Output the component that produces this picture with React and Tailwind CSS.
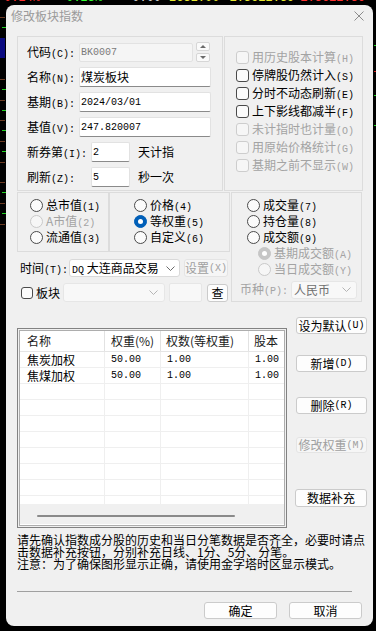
import React from 'react';

const K = ({ children }) => (
  <span className="font-['Liberation_Mono',monospace] text-[10px]">{children}</span>
);

const Chevron = ({ color = '#6b6b6b' }) => (
  <svg width="9" height="5" viewBox="0 0 9 5">
    <path d="M0.5 0.5 L4.5 4.5 L8.5 0.5" fill="none" stroke={color} strokeWidth="1" />
  </svg>
);

const Check = ({ disabled, children }) => (
  <div className="flex items-center h-[18px]">
    <span
      className={`w-[13px] h-[13px] rounded-[3px] border ${
        disabled ? 'border-[#cdcdcd] bg-[#f6f6f6]' : 'border-[#4a4a4a] bg-[#fbfbfb]'
      }`}
    />
    <span className={`ml-[3px] whitespace-nowrap ${disabled ? 'text-[#a3a3a3]' : ''}`}>{children}</span>
  </div>
);

const Radio = ({ checked, disabled, children }) => {
  let circle = 'border-[#4a4a4a] bg-[#fbfbfb]';
  if (disabled) circle = 'border-[#c9c9c9] bg-[#f6f6f6]';
  if (checked && !disabled) circle = 'border-[#005fb8] bg-[#005fb8]';
  if (checked && disabled) circle = 'border-[#c6c6c6] bg-[#c6c6c6]';
  return (
    <div className="flex items-center h-[16px]">
      <span className={`w-[13px] h-[13px] rounded-full border flex items-center justify-center ${circle}`}>
        {checked && <span className="w-[5px] h-[5px] rounded-full bg-white" />}
      </span>
      <span className={`ml-[3px] whitespace-nowrap ${disabled ? 'text-[#a3a3a3]' : ''}`}>{children}</span>
    </div>
  );
};

const Btn = ({ className = '', disabled, children }) => (
  <div
    className={`flex items-center justify-center rounded-[3px] border whitespace-nowrap ${
      disabled ? 'border-[#e4e4e4] bg-[#f6f6f6] text-[#a0a0a0]' : 'border-[#cbcbcb] bg-[#fdfdfd]'
    } ${className}`}
  >
    {children}
  </div>
);

const Input = ({ className = '', children }) => (
  <div
    className={`h-[20px] bg-white border border-[#e2e2e2] border-b-[#8a8a8a] rounded-[2px] flex items-center pl-[1px] ${className}`}
  >
    {children}
  </div>
);

const leftTicks = [
  [12, '#6b3a22', 0, 5, 1],
  [22, '#1fd11f', 2, 4, 1],
  [33, '#0a0a80', 0, 5, 20],
  [74, '#6b3a22', 0, 5, 1],
  [84, '#1fd11f', 2, 4, 1],
  [95, '#6b3a22', 0, 5, 1],
  [105, '#1fd11f', 2, 4, 1],
  [115, '#6b3a22', 0, 5, 1],
  [125, '#1fd11f', 2, 4, 1],
  [136, '#6b3a22', 0, 5, 1],
  [146, '#1fd11f', 2, 4, 1],
  [157, '#6b3a22', 0, 5, 1],
  [177, '#6b3a22', 0, 5, 1],
  [187, '#1fd11f', 2, 4, 1],
  [198, '#6b3a22', 0, 5, 1],
  [208, '#1fd11f', 2, 4, 1],
  [219, '#6b3a22', 0, 5, 1],
];

const rightTicks = [
  [7, '#1fd11f', 3],
  [20, '#0a0a80', 10],
  [40, '#1fd11f', 1],
  [66, '#d02020', 1],
  [90, '#1fd11f', 1],
  [120, '#1fd11f', 1],
  [180, '#1fd11f', 7],
  [200, '#1fd11f', 7],
];

const Ticks = ({ items, width }) => {
  let y = 0;
  return (
    <div className="flex flex-col" style={{ width }}>
      {items.map(([top, color, left = 0, w = width, h = 1], i) => {
        const mt = top - y;
        y = top + h;
        return (
          <div
            key={i}
            style={{ marginTop: mt, marginLeft: left, width: w, height: h, background: color }}
          />
        );
      })}
    </div>
  );
};

const rows = [
  ['焦炭加权', '50.00', '1.00', '1.00'],
  ['焦煤加权', '50.00', '1.00', '1.00'],
  ['', '', '', ''],
  ['', '', '', ''],
  ['', '', '', ''],
  ['', '', '', ''],
  ['', '', '', ''],
  ['', '', '', ''],
  ['', '', '', ''],
  ['', '', '', ''],
];

export default function App() {
  return (
    <div className="w-[376px] h-[631px] bg-black overflow-hidden font-['Noto_Sans_CJK_SC',sans-serif] text-[12px] text-black flex flex-col">
      {/* background quote strip */}
      <div className="h-[5px] overflow-hidden flex items-start font-['Liberation_Mono',monospace] text-[12px] leading-[13px] whitespace-nowrap">
        <span className="-mt-[8px] ml-[4px] text-[#ff3030]">0.24%</span>
        <span className="-mt-[8px] ml-[19px] text-[#30ff30]">-0.23%</span>
        <span className="-mt-[8px] ml-[30px] text-[#d8d8d8]">0.00</span>
        <span className="-mt-[8px] ml-[8px] text-[#e8e830]">2632.00</span>
        <span className="-mt-[8px] ml-[10px] text-[#e8e830]">1.3612.39</span>
        <span className="-mt-[8px] ml-[6px] text-[#ff3030]">1.3612.39</span>
        <span className="-mt-[8px] ml-[6px] text-[#30ff30]">-0</span>
      </div>

      <div className="flex">
        <Ticks items={leftTicks} width={6} />

        {/* dialog */}
        <div className="w-[367px] h-[621px] bg-[#f0f0f0] rounded-[8px] flex flex-col">
          <div className="h-[22px] flex items-center justify-between pl-[5px] pr-[9px]">
            <span className="text-[#9a9a9a]">修改板块指数</span>
            <svg width="10" height="10" viewBox="0 0 10 10">
              <path d="M0.5 0.5 L9.5 9.5 M9.5 0.5 L0.5 9.5" stroke="#8c8c8c" strokeWidth="1" />
            </svg>
          </div>

          <div className="pl-[11px] flex flex-col">
            {/* section 1 */}
            <div className="flex mt-[9px]">
              <div className="w-[206px] h-[155px] border border-[#dcdcdc] pt-[5px] pl-[9px] flex flex-col gap-[5px]">
                <div className="flex items-center h-[20px]">
                  <span className="w-[52px] whitespace-nowrap">代码<K>(C):</K></span>
                  <div className="h-[19px] w-[114px] bg-[#f5f5f5] border border-[#e2e2e2] rounded-[2px] flex items-center pl-[1px] text-[#7a7a7a]">
                    <K>BK0007</K>
                  </div>
                  <div className="ml-[3px] w-[14px] flex flex-col gap-[2px]">
                    <div className="h-[9px] border border-[#d6d6d6] bg-[#fafafa] rounded-[2px] flex items-center justify-center">
                      <span className="w-0 h-0 border-l-[3px] border-r-[3px] border-b-[3px] border-l-transparent border-r-transparent border-b-[#6a6a6a]" />
                    </div>
                    <div className="h-[9px] border border-[#d6d6d6] bg-[#fafafa] rounded-[2px] flex items-center justify-center">
                      <span className="w-0 h-0 border-l-[3px] border-r-[3px] border-t-[3px] border-l-transparent border-r-transparent border-t-[#6a6a6a]" />
                    </div>
                  </div>
                </div>
                <div className="flex items-center h-[20px]">
                  <span className="w-[52px] whitespace-nowrap">名称<K>(N):</K></span>
                  <Input className="w-[132px]">煤炭板块</Input>
                </div>
                <div className="flex items-center h-[20px]">
                  <span className="w-[52px] whitespace-nowrap">基期<K>(B):</K></span>
                  <Input className="w-[132px]"><K>2024/03/01</K></Input>
                </div>
                <div className="flex items-center h-[20px]">
                  <span className="w-[52px] whitespace-nowrap">基值<K>(V):</K></span>
                  <Input className="w-[132px]"><K>247.820007</K></Input>
                </div>
                <div className="flex items-center h-[20px]">
                  <span className="w-[64px] whitespace-nowrap">新券第<K>(I):</K></span>
                  <Input className="w-[39px]"><K>2</K></Input>
                  <span className="ml-[8px]">天计指</span>
                </div>
                <div className="flex items-center h-[20px]">
                  <span className="w-[64px] whitespace-nowrap">刷新<K>(Z):</K></span>
                  <Input className="w-[39px]"><K>5</K></Input>
                  <span className="ml-[8px]">秒一次</span>
                </div>
              </div>

              <div className="ml-[1px] w-[139px] h-[155px] border border-[#dcdcdc] pt-[11px] pl-[11px] flex flex-col">
                <Check disabled>用历史股本计算<K>(H)</K></Check>
                <Check>停牌股仍然计入<K>(S)</K></Check>
                <Check>分时不动态刷新<K>(E)</K></Check>
                <Check>上下影线都减半<K>(F)</K></Check>
                <Check disabled>未计指时也计量<K>(O)</K></Check>
                <Check disabled>用原始价格统计<K>(G)</K></Check>
                <Check disabled>基期之前不显示<K>(W)</K></Check>
              </div>
            </div>

            {/* section 2 */}
            <div className="flex mt-[1px]">
              <div className="w-[214px] flex flex-col">
                <div className="flex">
                  <div className="w-[92px] h-[60px] border border-[#dcdcdc] pt-[4px] pl-[12px] flex flex-col">
                    <Radio>总市值<K>(1)</K></Radio>
                    <Radio disabled>A市值<K>(2)</K></Radio>
                    <Radio>流通值<K>(3)</K></Radio>
                  </div>
                  <div className="w-[121px] h-[60px] border border-[#dcdcdc] pt-[4px] pl-[24px] flex flex-col">
                    <Radio>价格<K>(4)</K></Radio>
                    <Radio checked>等权重<K>(5)</K></Radio>
                    <Radio>自定义<K>(6)</K></Radio>
                  </div>
                </div>

                <div className="flex items-center h-[18px] mt-[7px] pl-[3px]">
                  <span className="w-[49px] whitespace-nowrap">时间<K>(T):</K></span>
                  <div className="w-[111px] h-[18px] bg-white border border-[#d9d9d9] rounded-[3px] flex items-center justify-between pl-[2px] pr-[4px]">
                    <span className="whitespace-nowrap"><K>DQ</K> 大连商品交易</span>
                    <Chevron />
                  </div>
                  <Btn disabled className="ml-[4px] w-[44px] h-[18px]">设置<K>(X)</K></Btn>
                </div>

                <div className="flex items-center h-[19px] mt-[6px] pl-[4px]">
                  <div className="w-[42px] flex items-center">
                    <span className="w-[12px] h-[12px] rounded-[3px] border border-[#4a4a4a] bg-[#fbfbfb]" />
                    <span className="ml-[3px]">板块</span>
                  </div>
                  <div className="w-[102px] h-[19px] bg-[#f8f8f8] border border-[#e6e6e6] rounded-[3px] flex items-center justify-end pr-[6px]">
                    <Chevron color="#b5b5b5" />
                  </div>
                  <div className="ml-[4px] w-[33px] h-[19px] bg-[#f8f8f8] border border-[#e6e6e6] rounded-[2px]" />
                  <Btn className="ml-[5px] w-[21px] h-[18px]">查</Btn>
                </div>
              </div>

              <div className="w-[131px] h-[110px] border border-[#dcdcdc] pt-[4px] flex flex-col">
                <div className="pl-[15px] flex flex-col">
                  <Radio>成交量<K>(7)</K></Radio>
                  <Radio>持仓量<K>(8)</K></Radio>
                  <Radio>成交额<K>(9)</K></Radio>
                  <div className="pl-[11px] flex flex-col">
                    <Radio checked disabled>基期成交额<K>(A)</K></Radio>
                    <Radio disabled>当日成交额<K>(Y)</K></Radio>
                  </div>
                </div>
                <div className="flex items-center mt-[3px] pl-[8px]">
                  <span className="w-[51px] whitespace-nowrap text-[#a3a3a3]">币种<K>(P):</K></span>
                  <div className="w-[66px] h-[18px] bg-[#f8f8f8] border border-[#e6e6e6] rounded-[3px] flex items-center justify-between pl-[2px] pr-[5px] text-[#6e6e6e]">
                    <span>人民币</span>
                    <Chevron color="#b5b5b5" />
                  </div>
                </div>
              </div>
            </div>

            {/* section 3 */}
            <div className="flex mt-[15px]">
              <div className="mt-[11px] w-[270px] h-[200px] border border-[#828282] p-[1px] bg-[#f0f0f0]">
                <div className="h-full border border-[#adadad] bg-white flex flex-col overflow-hidden">
                  <div className="h-[21px] flex border-b border-[#e5e5e5] text-[#1a1a1a] whitespace-nowrap">
                    <div className="w-[85px] shrink-0 border-r border-[#e2e2e2] pl-[7px] flex items-center">名称</div>
                    <div className="w-[56px] shrink-0 border-r border-[#e2e2e2] pl-[6px] flex items-center">权重(%)</div>
                    <div className="w-[88px] shrink-0 border-r border-[#e2e2e2] pl-[5px] flex items-center">权数(等权重)</div>
                    <div className="w-[60px] shrink-0 pl-[5px] flex items-center">股本</div>
                  </div>
                  <div className="h-[152px] overflow-hidden flex flex-col">
                    {rows.map((r, i) => (
                      <div key={i} className="h-[16px] shrink-0 flex border-b border-[#efefef] whitespace-nowrap">
                        <div className="w-[85px] shrink-0 border-r border-[#efefef] pl-[7px] flex items-center">{r[0]}</div>
                        <div className="w-[56px] shrink-0 border-r border-[#efefef] pl-[6px] flex items-center"><K>{r[1]}</K></div>
                        <div className="w-[88px] shrink-0 border-r border-[#efefef] pl-[6px] flex items-center"><K>{r[2]}</K></div>
                        <div className="w-[60px] shrink-0 pl-[6px] flex items-center"><K>{r[3]}</K></div>
                      </div>
                    ))}
                  </div>
                  <div className="h-[20px] bg-[#f0f0f0] flex items-center pl-[17px] pt-[3px]">
                    <div className="w-[198px] h-[2px] rounded-full bg-[#8a8a8a]" />
                  </div>
                </div>
              </div>

              <div className="ml-[9px] flex flex-col">
                <Btn className="w-[71px] h-[17px]">设为默认<K>(U)</K></Btn>
                <Btn className="mt-[21px] w-[71px] h-[17px]">新增<K>(D)</K></Btn>
                <Btn className="mt-[25px] w-[71px] h-[17px]">删除<K>(R)</K></Btn>
                <Btn disabled className="mt-[23px] w-[71px] h-[16px]">修改权重<K>(M)</K></Btn>
                <Btn className="mt-[36px] -ml-[1px] w-[72px] h-[18px]">数据补充</Btn>
              </div>
            </div>

            {/* notes */}
            <div className="mt-[6px] leading-[12px] whitespace-nowrap">
              <div>请先确认指数成分股的历史和当日分笔数据是否齐全，必要时请点</div>
              <div>击数据补充按钮，分别补充日线、1分、5分、分笔。</div>
              <div>注意：为了确保图形显示正确，请使用金字塔时区显示模式。</div>
            </div>

            <div className="mt-[21px] w-[335px] h-[1px] bg-[#a0a0a0]" />

            <div className="flex mt-[10px]">
              <Btn className="ml-[187px] w-[73px] h-[17px]">确定</Btn>
              <Btn className="ml-[12px] w-[73px] h-[17px]">取消</Btn>
            </div>
          </div>
        </div>

        <Ticks items={rightTicks} width={3} />
      </div>
    </div>
  );
}
